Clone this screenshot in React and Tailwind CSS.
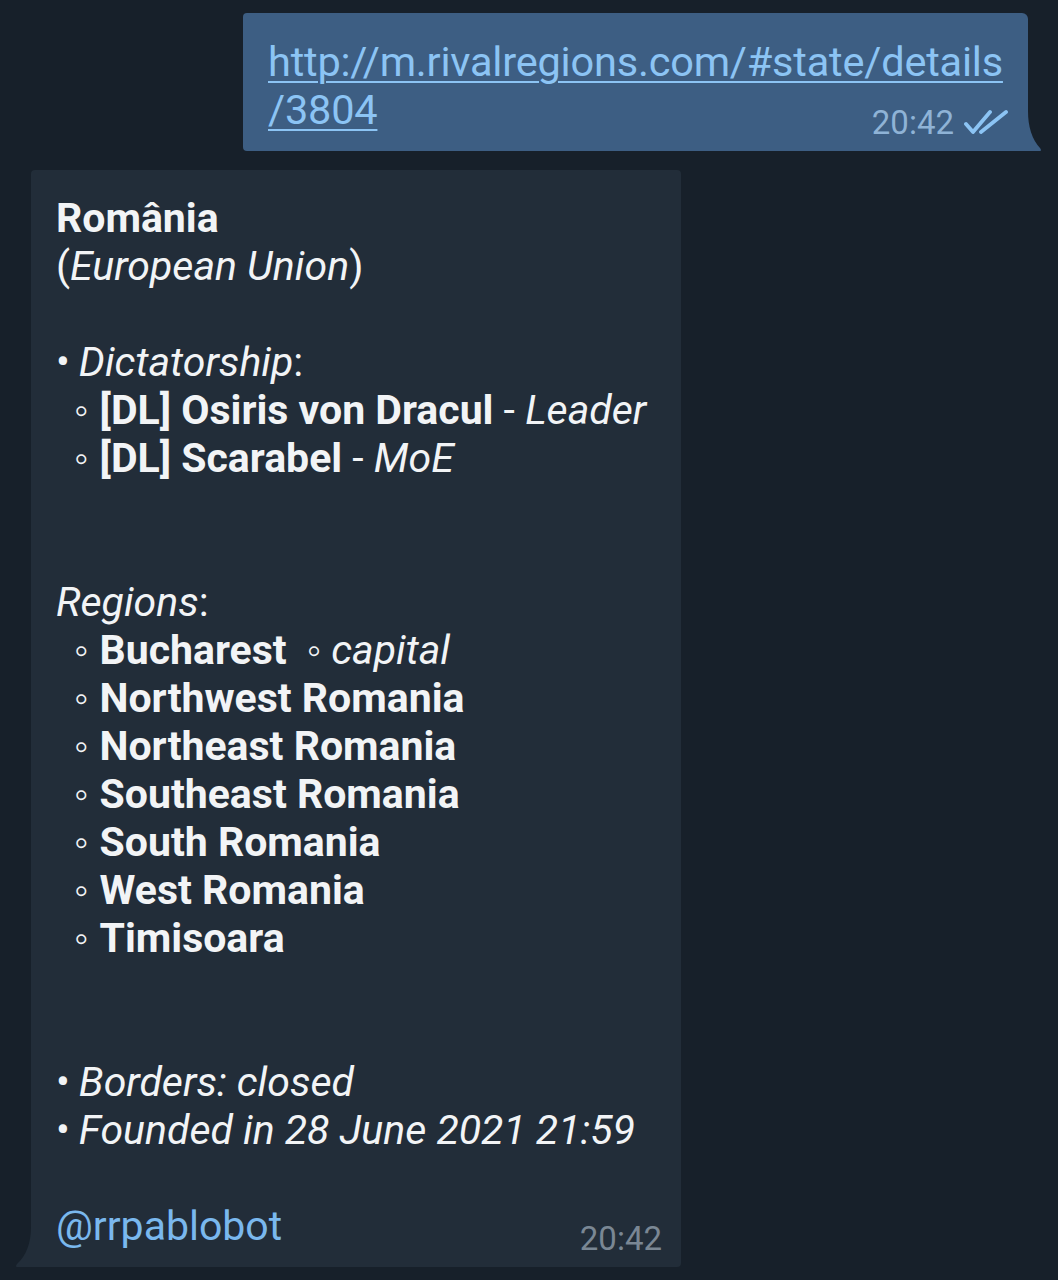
export default function App() {
  const F = { fontFamily: "Roboto, 'Noto Sans', sans-serif" };
  const Sub = ({ children }) => (
    <div className="pl-[18px]">
      <span className="mr-[11px]">◦</span>
      {children}
    </div>
  );
  const Bul = ({ children }) => (
    <div>
      <span className="mr-[9px]">•</span>
      {children}
    </div>
  );
  return (
    <div className="w-[1058px] h-[1280px] bg-[#17202a] overflow-hidden relative" style={F}>
      <div className="flex justify-end pt-[13px] pr-[30px]">
        <div className="relative w-[785px] h-[138px] bg-[#3d5e83] rounded-tl-[4px] rounded-tr-[6px] rounded-bl-[4px] pl-[25px] pr-[20px] pt-[25px] text-[41.5px] leading-[48px] text-[#8cc4f4]">
          <div className="underline decoration-[2px] underline-offset-[5px] tracking-[-0.2px]">
            http://m.rivalregions.com/#state/details
            <br />/3804
          </div>
          <div className="absolute right-[20px] bottom-[10px] flex items-center gap-[10px] text-[#8fb3d6] text-[33px] leading-[36px]">
            <span>20:42</span>
            <svg width="44" height="28" viewBox="0 0 44 28" fill="none" stroke="#8cc4f4" strokeWidth="3.8" strokeLinecap="round" strokeLinejoin="round">
              <path d="M2 15 L9 23 L26 3" />
              <path d="M17 23 L42 3" />
            </svg>
          </div>
          <svg className="absolute right-[-14px] bottom-0" width="16" height="40" viewBox="0 0 16 40">
            <path d="M0 0 L0 40 L14 40 Q16 40 14 37 Q2 24 2 0 Z" fill="#3d5e83" />
          </svg>
        </div>
      </div>
      <div className="pl-[31px] pt-[19px]">
        <div className="relative w-[650px] h-[1097px] bg-[#222d39] rounded-tl-[4px] rounded-tr-[4px] rounded-br-[4px] pl-[25px] pt-[24px] text-[41px] leading-[48px] text-[#f2f4f6]">
          <div className="font-bold">România</div>
          <div>(<i>European Union</i>)</div>
          <div className="h-[48px]" />
          <Bul><i>Dictatorship</i>:</Bul>
          <Sub><b>[DL] Osiris von Dracul</b> - <i>Leader</i></Sub>
          <Sub><b>[DL] Scarabel</b> - <i>MoE</i></Sub>
          <div className="h-[96px]" />
          <div><i>Regions</i>:</div>
          <Sub><b>Bucharest</b><span className="ml-[20px] mr-[10px]">◦</span><i>capital</i></Sub>
          <Sub><b>Northwest Romania</b></Sub>
          <Sub><b>Northeast Romania</b></Sub>
          <Sub><b>Southeast Romania</b></Sub>
          <Sub><b>South Romania</b></Sub>
          <Sub><b>West Romania</b></Sub>
          <Sub><b>Timisoara</b></Sub>
          <div className="h-[96px]" />
          <Bul><i>Borders: closed</i></Bul>
          <Bul><i>Founded in 28 June 2021 21:59</i></Bul>
          <div className="h-[48px]" />
          <div className="text-[#7ab8ee]">@rrpablobot</div>
          <div className="absolute right-[19px] bottom-[10px] text-[33px] leading-[36px] text-[#7a8794]">20:42</div>
          <svg className="absolute left-[-16px] bottom-0" width="18" height="40" viewBox="0 0 18 40">
            <path d="M18 0 L18 40 L2 40 Q0 40 2 37 Q16 24 16 0 Z" fill="#222d39" />
          </svg>
        </div>
      </div>
    </div>
  );
}
